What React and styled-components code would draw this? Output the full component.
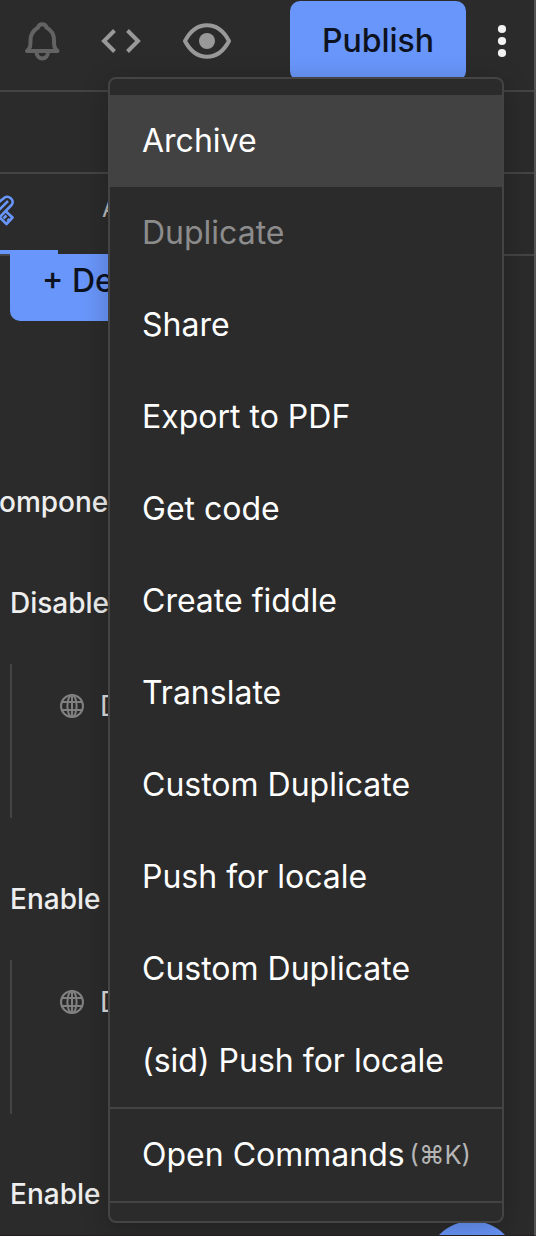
import React from 'react';
import styled, { createGlobalStyle } from 'styled-components';

const GlobalStyle = createGlobalStyle`
  *, *::before, *::after { box-sizing: border-box; }
  body {
    margin: 0;
    background: #2b2b2b;
    font-family: Inter, "Liberation Sans", sans-serif;
    overflow: hidden;
  }
  svg { display: block; flex: none; }
`;

const Panel = styled.div`
  position: relative;
  width: 536px;
  height: 1236px;
  overflow: hidden;
  display: flex;
  flex-direction: column;
  background: #2b2b2b;
  border-right: 2px solid #545351;
  border-bottom: 1px solid #241d21;
`;

const TopBar = styled.header`
  flex: none;
  height: 92px;
  display: flex;
  align-items: flex-start;
  border-bottom: 2px solid #444;
`;

const Tools = styled.div`
  width: 290px;
  height: 82px;
  padding-left: 22px;
  display: flex;
  align-items: center;
`;

const ToolIcon = styled.svg`
  margin-right: ${(p) => p.$gap || 0}px;
`;

const PublishButton = styled.button`
  width: 176px;
  height: 80px;
  margin-top: 1px;
  padding: 0;
  border: 0;
  border-radius: 10px;
  background: #6996fa;
  color: #0d1220;
  font: 500 32px/80px Inter, sans-serif;
`;

const MoreButton = styled.button`
  width: 68px;
  height: 82px;
  padding: 0 0 0 4px;
  border: 0;
  background: none;
  display: flex;
  align-items: center;
  justify-content: center;
`;

const SubBar = styled.div`
  flex: none;
  height: 82px;
  border-bottom: 2px solid #444;
`;

const Tabs = styled.nav`
  flex: none;
  height: 82px;
  display: flex;
  border-bottom: 2px solid #444;
`;

const ActiveTab = styled.div`
  width: 58px;
  height: 80px;
  padding-top: 20px;
  border-bottom: 4px solid #6996fa;
`;

const Tab = styled.div`
  padding-left: 44px;
  color: #b8b8b8;
  font-size: 24px;
  line-height: 70px;
`;

const Content = styled.main`
  flex: 1;
  min-height: 0;
  margin-top: -2px;
  padding-left: 10px;
  overflow: hidden;
`;

const DefineButton = styled.button`
  display: block;
  width: 300px;
  height: 67px;
  padding: 0 0 13px 32px;
  border: 0;
  border-radius: 0 0 10px 10px;
  background: #6996fa;
  color: #0d1220;
  font: 500 32px/54px Inter, sans-serif;
  text-align: left;
`;

const SectionLabel = styled.div`
  height: 40px;
  margin-top: ${(p) => p.$top}px;
  margin-left: ${(p) => p.$left || 0}px;
  color: #eee;
  font-size: 28px;
  font-weight: 500;
  line-height: 40px;
  white-space: nowrap;
`;

const Group = styled.div`
  height: 154px;
  margin-top: ${(p) => p.$top}px;
  padding: 22px 0 0 48px;
  border-left: 2px solid #444;
`;

const Field = styled.div`
  height: 40px;
  display: flex;
  align-items: center;
  gap: 16px;
  color: #ddd;
  font-size: 28px;
`;

const HelpBubble = styled.div`
  position: absolute;
  left: 426px;
  top: 1221px;
  width: 92px;
  height: 92px;
  border-radius: 50%;
  background: #6996fa;
`;

const Menu = styled.div`
  position: absolute;
  left: 108px;
  top: 77px;
  width: 396px;
  height: 1146px;
  padding-top: 16px;
  border: 2px solid #444;
  border-radius: 8px;
  background: #2b2b2b;
  box-shadow: 0 6px 28px rgba(0, 0, 0, 0.22);
  overflow: hidden;
`;

const MenuItem = styled.div`
  height: 92px;
  padding: 0 0 1px 32px;
  display: flex;
  align-items: center;
  background: ${(p) => (p.$active ? '#424242' : 'transparent')};
  color: ${(p) => (p.$disabled ? '#8c8c8c' : '#fff')};
  font-size: 32px;
  white-space: nowrap;
`;

const CommandRow = styled(MenuItem)`
  height: 96px;
  border-top: 2px solid #444;
  border-bottom: 2px solid #444;
`;

const Shortcut = styled.span`
  margin-left: 5px;
  color: #b5b5b5;
  font-size: 25.5px;
`;

const Globe = () => (
  <svg width="24" height="24" viewBox="0 0 24 24" fill="none" stroke="#808080" strokeWidth="2">
    <circle cx="12" cy="12" r="11" />
    <ellipse cx="12" cy="12" rx="4.6" ry="11" />
    <path d="M2 8h20M2 16h20M12 1v22" />
  </svg>
);

const items = [
  { label: 'Archive', active: true },
  { label: 'Duplicate', disabled: true },
  { label: 'Share' },
  { label: 'Export to PDF' },
  { label: 'Get code' },
  { label: 'Create fiddle' },
  { label: 'Translate' },
  { label: 'Custom Duplicate' },
  { label: 'Push for locale' },
  { label: 'Custom Duplicate' },
  { label: '(sid) Push for locale' },
];

export default function App() {
  return (
    <>
      <GlobalStyle />
      <Panel>
        <TopBar>
          <Tools>
            <ToolIcon $gap={38} width="40" height="40" viewBox="0 0 40 40" fill="none" stroke="#636363" strokeWidth="4" strokeLinejoin="round" strokeLinecap="round">
              <path d="M5 30C8.500 27 8.500 25 8.500 19C8.500 12 12 9 16 6.500C17 2 23.500 2 24.500 6.500C29 9 32 12 32 19C32 25 32 27 35.500 30Z" />
              <path d="M14.500 31C14.500 39.500 26 39.500 26 31" />
            </ToolIcon>
            <ToolIcon $gap={41} width="42" height="40" viewBox="0 0 42 40" fill="none" stroke="#999" strokeWidth="4">
              <path d="M14.500 9.500L4 20L14.500 30.500M27.500 9.500L38 20L27.500 30.500" />
            </ToolIcon>
            <ToolIcon width="50" height="40" viewBox="0 0 50 40" fill="none" stroke="#999" strokeWidth="4" strokeLinejoin="round">
              <path d="M2 20C13 -1 35 -1 46 20C35 41 13 41 2 20Z" />
              <circle cx="24" cy="20" r="8" fill="#999" stroke="none" />
            </ToolIcon>
          </Tools>
          <PublishButton>Publish</PublishButton>
          <MoreButton aria-label="More">
            <svg width="10" height="34" viewBox="0 0 10 34" fill="#f2f2f2">
              <circle cx="5" cy="5" r="4.1" />
              <circle cx="5" cy="17" r="4.1" />
              <circle cx="5" cy="29" r="4.1" />
            </svg>
          </MoreButton>
        </TopBar>
        <SubBar />
        <Tabs>
          <ActiveTab>
            <svg width="16" height="34" viewBox="0 0 16 34" fill="none" stroke="#6996fa" strokeWidth="2.600" strokeLinejoin="round">
              <path d="M-6 12L3.500 4.500C8 0 15.500 6 11.500 11L-4 27" />
              <path d="M-2 17L8 7M5.500 17L12.500 23.500L6.500 30L-4 20" />
              <path d="M6.500 21.500L3.500 24.500M9.500 25L7.500 27" />
            </svg>
          </ActiveTab>
          <Tab>A</Tab>
        </Tabs>
        <Content>
          <DefineButton>+ De</DefineButton>
          <SectionLabel $top={161} $left={-11}>ompone</SectionLabel>
          <SectionLabel $top={61}>Disable</SectionLabel>
          <Group $top={41}>
            <Field><Globe />D</Field>
          </Group>
          <SectionLabel $top={61}>Enable</SectionLabel>
          <Group $top={41}>
            <Field><Globe />D</Field>
          </Group>
          <SectionLabel $top={60}>Enable</SectionLabel>
        </Content>
        <HelpBubble />
        <Menu>
          {items.map((item, i) => (
            <MenuItem key={i} $active={item.active} $disabled={item.disabled}>{item.label}</MenuItem>
          ))}
          <CommandRow>
            Open Commands<Shortcut>(⌘K)</Shortcut>
          </CommandRow>
        </Menu>
      </Panel>
    </>
  );
}
